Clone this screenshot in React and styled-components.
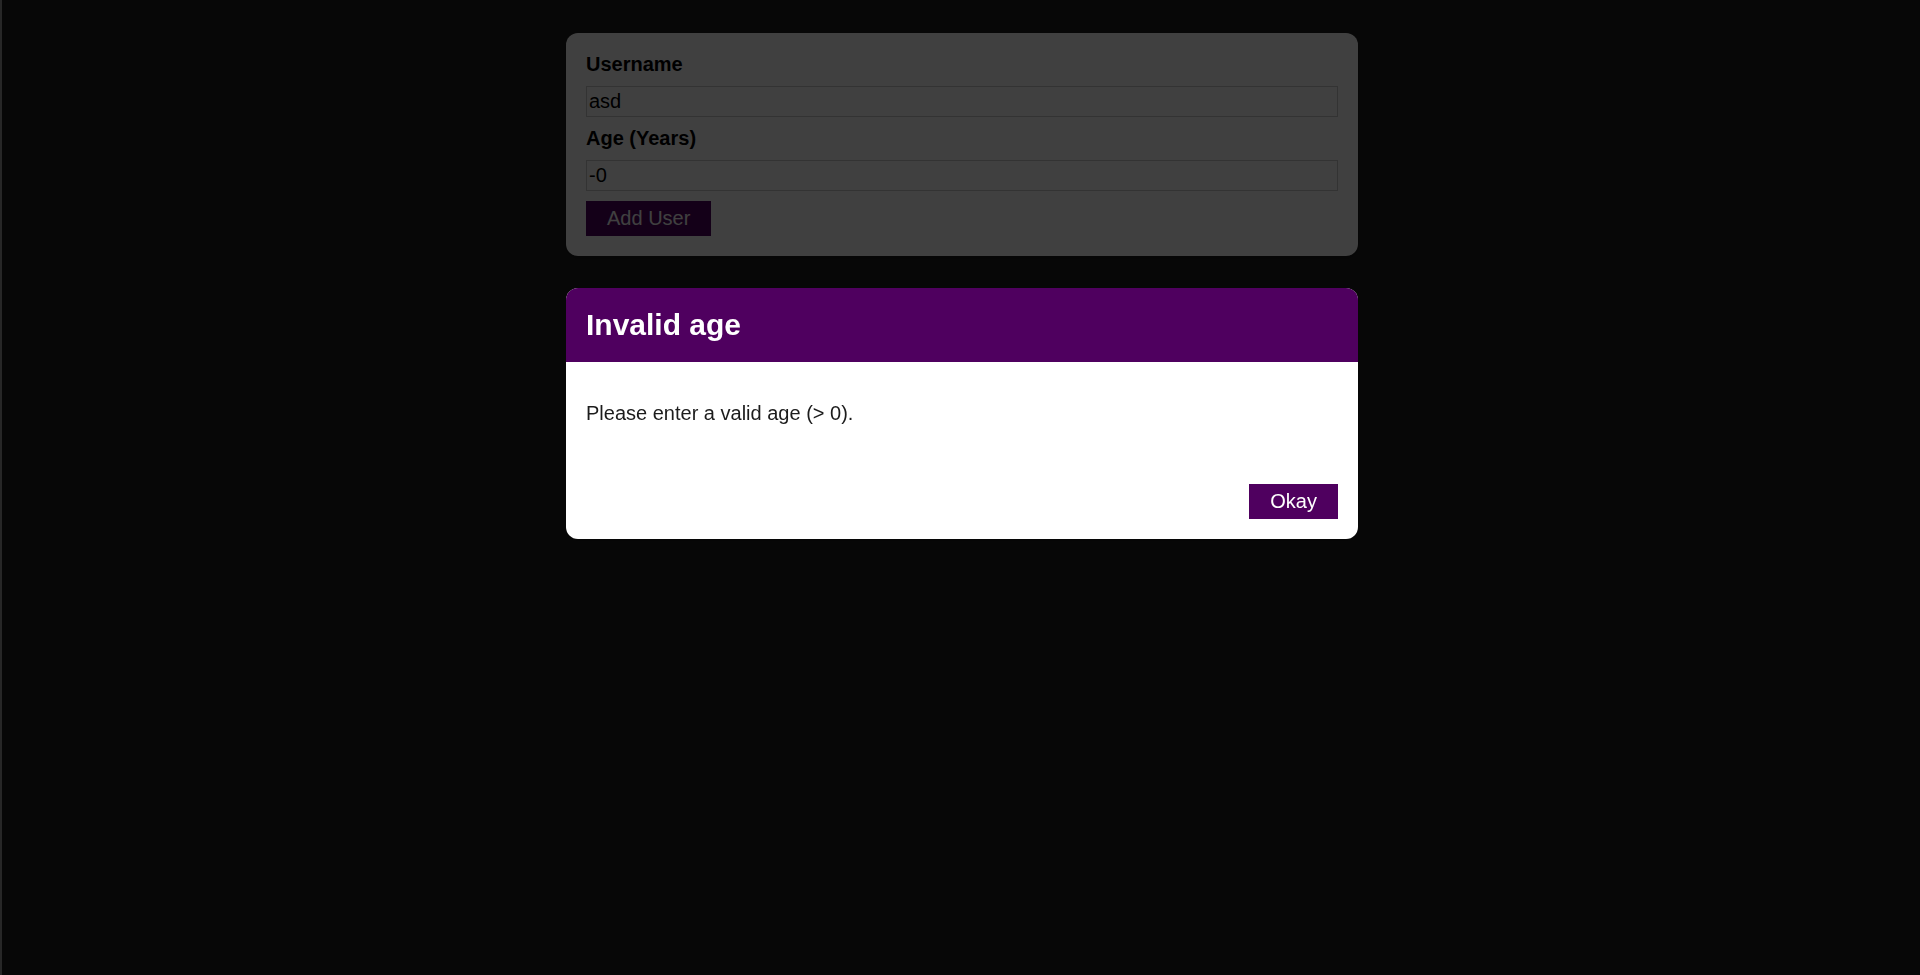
import React from 'react';
import styled, { createGlobalStyle } from 'styled-components';

const GlobalStyle = createGlobalStyle`
	* {
		box-sizing: border-box;
	}

	html {
		font-family: 'Liberation Sans', Arial, Helvetica, sans-serif;
		font-size: 20px;
	}

	body {
		margin: 0;
		background: #1f1f1f;
		box-shadow: inset 2px 0 0 #9a9a9a;
		min-height: 100vh;
	}
`;

const Card = styled.div`
	background: white;
	box-shadow: 0 2px 8px rgba(0, 0, 0, 0.26);
	border-radius: 12px;
`;

const FormCard = styled(Card)`
	margin: 33px 0 0 calc(50% - 394px);
	width: 792px;
	padding: 20px;
`;

const Label = styled.label`
	display: block;
	font-weight: bold;
	font-size: 20px;
	line-height: 23px;
	margin-bottom: 10px;
`;

const Input = styled.input`
	font: inherit;
	font-size: 20px;
	line-height: 23px;
	display: block;
	width: 100%;
	border: 1px solid #ccc;
	padding: 3px 2px;
	margin: 0 0 10px;
	color: #000;
	background: white;
	outline: none;
`;

const Button = styled.button`
	font: inherit;
	font-size: 20px;
	line-height: 23px;
	border: 1px solid #4f005f;
	background: #4f005f;
	color: white;
	padding: 5px 20px;
	cursor: pointer;
`;

const Backdrop = styled.div`
	position: fixed;
	inset: 0;
	z-index: 10;
	background: rgba(0, 0, 0, 0.75);
`;

const Modal = styled(Card)`
	position: fixed;
	top: 288px;
	left: calc(50% - 394px);
	width: 792px;
	z-index: 100;
	overflow: hidden;
`;

const Header = styled.header`
	background: #4f005f;
	padding: 20px;
`;

const Title = styled.h2`
	margin: 0;
	color: white;
	font-size: 30px;
	line-height: 34px;
`;

const Content = styled.div`
	padding: 20px;

	p {
		margin: 20px 0;
		font-size: 20px;
		line-height: 22px;
		color: #1c1c1c;
	}
`;

const Actions = styled.footer`
	padding: 20px;
	display: flex;
	justify-content: flex-end;
`;

export default function App() {
	return (
		<>
			<GlobalStyle />
			<Backdrop />
			<Modal>
				<Header>
					<Title>Invalid age</Title>
				</Header>
				<Content>
					<p>Please enter a valid age (&gt; 0).</p>
				</Content>
				<Actions>
					<Button>Okay</Button>
				</Actions>
			</Modal>
			<FormCard>
				<form onSubmit={(e) => e.preventDefault()}>
					<Label htmlFor="username">Username</Label>
					<Input id="username" type="text" defaultValue="asd" />
					<Label htmlFor="age">Age (Years)</Label>
					<Input id="age" type="number" defaultValue="-0" />
					<Button type="submit">Add User</Button>
				</form>
			</FormCard>
		</>
	);
}
